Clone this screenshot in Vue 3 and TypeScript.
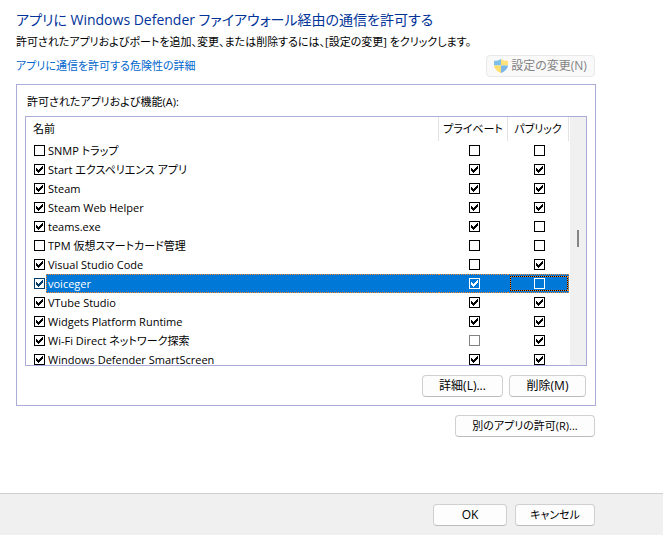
<script setup lang="ts">
import { ref } from 'vue'

interface AppRule {
  name: string
  enabled: boolean
  priv: boolean
  pub: boolean
  lockPrivate?: boolean
}

const rules = ref<AppRule[]>([
  { name: 'SNMP トラップ', enabled: false, priv: false, pub: false },
  { name: 'Start エクスペリエンス アプリ', enabled: true, priv: true, pub: true },
  { name: 'Steam', enabled: true, priv: true, pub: true },
  { name: 'Steam Web Helper', enabled: true, priv: true, pub: true },
  { name: 'teams.exe', enabled: true, priv: true, pub: false },
  { name: 'TPM 仮想スマートカード管理', enabled: false, priv: false, pub: false },
  { name: 'Visual Studio Code', enabled: true, priv: false, pub: true },
  { name: 'voiceger', enabled: true, priv: true, pub: false },
  { name: 'VTube Studio', enabled: true, priv: true, pub: true },
  { name: 'Widgets Platform Runtime', enabled: true, priv: true, pub: true },
  { name: 'Wi-Fi Direct ネットワーク探索', enabled: true, priv: false, pub: true, lockPrivate: true },
  { name: 'Windows Defender SmartScreen', enabled: true, priv: true, pub: true },
])

const selected = ref('voiceger')
</script>

<template>
  <div class="window">
    <main class="content">
      <h1>アプリに Windows Defender ファイアウォール経由の通信を許可する</h1>
      <p class="lead">許可されたアプリおよびポートを追加、変更、または削除するには、[設定の変更] をクリックします。</p>
      <div class="link-row">
        <a href="#">アプリに通信を許可する危険性の詳細</a>
        <button type="button" class="btn change" disabled>
          <svg class="shield" width="14" height="14" viewBox="0 0 14 14" aria-hidden="true">
            <path d="M7 0C5.200 1.300 3 1.800 0 1.800V6.500H7Z" fill="#7fc0ea" />
            <path d="M7 0C8.800 1.300 11 1.800 14 1.800V6.500H7Z" fill="#ffe27a" />
            <path d="M0 6.500C0.300 10 3.500 12.500 7 14V6.500Z" fill="#ffdf70" />
            <path d="M14 6.500C13.700 10 10.500 12.500 7 14V6.500Z" fill="#7bb7e6" />
          </svg>
          <span>設定の変更(N)</span>
        </button>
      </div>

      <section class="group">
        <h2 id="list-label">許可されたアプリおよび機能(A):</h2>
        <div class="list">
          <table aria-labelledby="list-label">
            <colgroup>
              <col class="c-check" />
              <col />
              <col class="c-private" />
              <col class="c-public" />
            </colgroup>
            <thead>
              <tr>
                <th colspan="2" class="h-name">名前</th>
                <th>プライベート</th>
                <th>パブリック</th>
              </tr>
            </thead>
            <tbody>
              <tr
                v-for="(rule, i) in rules"
                :key="rule.name"
                :class="{ selected: rule.name === selected }"
                @click="selected = rule.name"
              >
                <td class="check"><input :id="`rule-${i}`" v-model="rule.enabled" type="checkbox" /></td>
                <td class="name"><label :for="`rule-${i}`">{{ rule.name }}</label></td>
                <td class="flag">
                  <input
                    v-model="rule.priv"
                    type="checkbox"
                    :disabled="rule.lockPrivate"
                    :aria-label="`${rule.name} プライベート`"
                  />
                </td>
                <td class="flag last">
                  <span class="focus-box">
                    <input v-model="rule.pub" type="checkbox" :aria-label="`${rule.name} パブリック`" />
                  </span>
                </td>
              </tr>
            </tbody>
          </table>
          <div class="scrollbar" aria-hidden="true"><span class="thumb"></span></div>
        </div>
        <div class="actions">
          <button type="button" class="btn details">詳細(L)...</button>
          <button type="button" class="btn remove">削除(M)</button>
        </div>
      </section>

      <div class="other-row">
        <button type="button" class="btn compact other">別のアプリの許可(R)...</button>
      </div>
    </main>

    <footer>
      <button type="button" class="btn ok">OK</button>
      <button type="button" class="btn compact cancel">キャンセル</button>
    </footer>
  </div>
</template>

<style>
body {
  margin: 0;
  background: #fff;
}
</style>

<style scoped>
.window {
  display: flex;
  flex-direction: column;
  min-height: 100vh;
  box-sizing: border-box;
  color: #000;
  font: 11px/18px "Open Sans", "Noto Sans CJK JP", sans-serif;
  font-feature-settings: "palt";
}

.content {
  flex: 1;
  padding: 8px 67px 0 16px;
}

h1 {
  margin: 0;
  color: #003399;
  font-size: 14px;
  font-weight: 400;
  line-height: 24px;
  white-space: nowrap;
}

.lead {
  margin: 1px 0 0;
  white-space: nowrap;
}

.link-row {
  display: flex;
  justify-content: space-between;
  align-items: center;
  margin-top: 4px;
  padding-right: 1px;
}

a {
  color: #0066cc;
  text-decoration: none;
}

.btn {
  box-sizing: border-box;
  height: 22px;
  padding: 0;
  border: 1px solid #d0d0d0;
  border-bottom-color: #bcbcbc;
  border-radius: 4px;
  background: #fdfdfd;
  color: #000;
  font: inherit;
  font-feature-settings: inherit;
  font-size: 12px;
  line-height: 18px;
  white-space: nowrap;
}

.compact {
  font-size: 11px;
}

.change {
  display: flex;
  justify-content: center;
  align-items: center;
  gap: 3px;
  width: 109px;
  border-color: #e8e8e8;
  background: #f9f9f9;
  color: #838383;
}

.group {
  margin-top: 7px;
  padding: 8px 8px 9px;
  border: 1px solid #acacd8;
}

h2 {
  margin: 0 2px 5px;
  font-size: 11px;
  font-weight: 400;
  line-height: 18px;
}

.list {
  display: flex;
  box-sizing: border-box;
  height: 250px;
  overflow: hidden;
  border: 1px solid #acacd8;
}

table {
  flex: 1;
  align-self: flex-start;
  table-layout: fixed;
  width: 100%;
  margin-right: 1px;
  border-spacing: 0;
}

.c-check {
  width: 20px;
}

.c-private {
  width: 69px;
}

.c-public {
  width: 61px;
}

th {
  height: 24px;
  padding: 0;
  border-right: 1px solid #e2e2e2;
  font-weight: 400;
  line-height: 18px;
  text-align: center;
  white-space: nowrap;
}

.h-name {
  padding-left: 7px;
  text-align: left;
}

td {
  box-sizing: border-box;
  height: 19px;
  padding: 0;
  line-height: 17px;
  white-space: nowrap;
}

td.check {
  padding-left: 8px;
}

td.name {
  padding-left: 2px;
}

td.flag {
  padding-left: 2px;
}

.name label {
  display: block;
}

input {
  position: relative;
  appearance: none;
  display: block;
  box-sizing: border-box;
  width: 11px;
  height: 11px;
  margin: 0;
  border: 1px solid currentColor;
  background: transparent;
  color: #000;
}

.flag input {
  margin: 0 auto;
}

input:checked::before {
  content: "";
  position: absolute;
  inset: 1px;
  background: currentColor;
  clip-path: polygon(0 2px, 1px 2px, 1px 3px, 2px 3px, 2px 4px, 3px 4px, 3px 3px, 4px 3px, 4px 2px, 5px 2px, 5px 1px, 6px 1px, 6px 0, 7px 0, 7px 3px, 6px 3px, 6px 4px, 5px 4px, 5px 5px, 4px 5px, 4px 6px, 3px 6px, 3px 7px, 2px 7px, 2px 6px, 1px 6px, 1px 5px, 0 5px);
}

input:disabled {
  color: #838383;
}

/* The selection outline is a row of single-pixel dots along the cell edges. */
.selected {
  --dots-x: linear-gradient(90deg, #ff8728 50%, #0078d7 50%);
  --dots-y: linear-gradient(#ff8728 50%, #0078d7 50%);
}

.selected td:not(.check) {
  background:
    var(--dots-x) left top / 2px 1px repeat-x,
    var(--dots-x) left bottom / 2px 1px repeat-x,
    #0078d7;
  color: #fff;
}

.selected td.name:not(.check) {
  background:
    var(--dots-x) left top / 2px 1px repeat-x,
    var(--dots-x) left bottom / 2px 1px repeat-x,
    var(--dots-y) left top / 1px 2px repeat-y,
    #0078d7;
}

.selected td.last:not(.check) {
  padding-right: 1px;
  background:
    var(--dots-x) left top / 2px 1px repeat-x,
    var(--dots-x) left bottom / 2px 1px repeat-x,
    var(--dots-y) right top / 1px 2px repeat-y,
    #0078d7;
}

.selected .check input {
  color: #003c6c;
}

.selected .flag input {
  color: #fff;
}

.focus-box {
  display: flex;
  align-items: center;
  box-sizing: border-box;
  height: 15px;
}

/* Two-tone focus rectangle: black and orange pixels in turn. */
.selected .focus-box {
  --edge-x: linear-gradient(90deg, #000 50%, #ff8728 50%);
  --edge-y: linear-gradient(#000 50%, #ff8728 50%);
  background:
    var(--edge-x) left top / 2px 1px repeat-x,
    var(--edge-x) left bottom / 2px 1px repeat-x,
    var(--edge-y) left top / 1px 2px repeat-y,
    var(--edge-y) right top / 1px 2px repeat-y;
}

.scrollbar {
  display: flex;
  flex: none;
  justify-content: center;
  width: 16px;
  background: #f0f0f0;
}

.thumb {
  width: 2px;
  height: 17px;
  margin-top: 113px;
  background: #858585;
}

.actions {
  display: flex;
  justify-content: flex-end;
  gap: 6px;
  margin-top: 9px;
  margin-bottom: -1px;
  padding-right: 1px;
}

.details {
  width: 81px;
}

.remove {
  width: 77px;
}

.other-row {
  display: flex;
  justify-content: flex-end;
  margin-top: 9px;
  padding-right: 1px;
}

.other {
  width: 140px;
}

footer {
  display: flex;
  justify-content: flex-end;
  gap: 8px;
  padding: 10px 68px 9px 16px;
  border-top: 1px solid #cfcfcf;
  background: #f0f0f0;
}

.ok {
  width: 74px;
}

.cancel {
  width: 80px;
}
</style>
